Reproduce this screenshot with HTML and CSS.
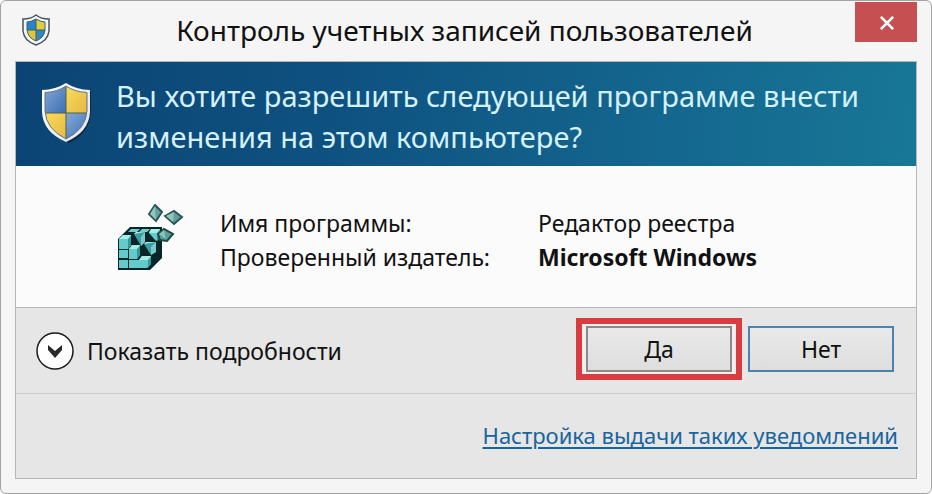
FILE: index.html
```html
<!DOCTYPE html>
<html lang="ru">
<head>
<meta charset="utf-8">
<title>Контроль учетных записей пользователей</title>
<link rel="stylesheet" href="styles.css">
</head>
<body>
<svg class="defs" aria-hidden="true">
  <defs>
    <linearGradient id="blue" x1="0" y1="0" x2="1" y2="1"><stop offset="0" stop-color="#86a9d6"/><stop offset="1" stop-color="#3c6fb2"/></linearGradient>
    <linearGradient id="gold" x1="0" y1="0" x2="1" y2="1"><stop offset="0" stop-color="#fbdc58"/><stop offset="1" stop-color="#e3b845"/></linearGradient>
    <linearGradient id="rim" x1="0" y1="0" x2="1" y2="1"><stop offset="0" stop-color="#ffffff"/><stop offset="1" stop-color="#dde5ec"/></linearGradient>
    <clipPath id="inner"><path d="M24 4Q33 10 45 10.500V29Q44 47 24 57Q4 47 3 29V10.500Q15 10 24 4Z"/></clipPath>
    <symbol id="shield" viewBox="0 0 50 62">
      <path d="M26 3Q35 9 49 9V30Q48 51 27 61Q6 51 3 31V10Q17 9 26 3Z" fill="#101c2c" opacity=".75"/>
      <path d="M24 1Q34 7.500 48 8V30Q47 50 24 60Q1 50 0 30V8Q14 7.500 24 1Z" fill="url(#rim)"/>
      <g clip-path="url(#inner)">
        <path d="M2 3H24V31H2Z" fill="url(#blue)"/>
        <path d="M24 3H46V31H24Z" fill="url(#gold)"/>
        <path d="M2 31H24V58H2Z" fill="url(#gold)"/>
        <path d="M24 31H46V58H24Z" fill="url(#blue)"/>
        <path d="M24 4V58M3 31H45" stroke="#4c6254" stroke-width="1" fill="none"/>
      </g>
      <path d="M24 4Q33 10 45 10.500V29Q44 47 24 57Q4 47 3 29V10.500Q15 10 24 4Z" fill="none" stroke="#60748a" stroke-width="1"/>
    </symbol>
    <symbol id="shield-small" viewBox="0 0 28 32">
      <path d="M14 1Q19 5 27 5V17Q26 27 14 31Q2 27 1 17V5Q9 5 14 1Z" fill="#f4f7f8" stroke="#48535c" stroke-width="1.500"/>
      <path d="M14 5Q9 8 5 8V16H14Z" fill="#2684c8"/>
      <path d="M14 5Q19 8 23 8V16H14Z" fill="#e5cc3c"/>
      <path d="M5 16H14V27Q6 24 5 16Z" fill="#e0c438"/>
      <path d="M23 16H14V27Q22 24 23 16Z" fill="#3585c0"/>
      <path d="M14 5Q9 8 5 8V16Q6 24 14 27Q22 24 23 16V8Q19 8 14 5ZM14 5V27M5 16H23" fill="none" stroke="#35606c" stroke-width="1"/>
    </symbol>
  </defs>
</svg>
<main class="window">
  <header class="titlebar">
    <svg class="title-icon" aria-hidden="true"><use href="#shield-small"/></svg>
    <h1 class="title">Контроль учетных записей пользователей</h1>
    <button class="close" type="button" aria-label="Закрыть">
      <svg class="close-icon" viewBox="0 0 18 16" aria-hidden="true"><path d="M2 1L16 15M16 1L2 15" stroke="#fff" stroke-width="3"/></svg>
    </button>
  </header>
  <div class="content">
    <section class="banner">
      <svg class="banner-icon" aria-hidden="true"><use href="#shield"/></svg>
      <h2 class="question">Вы хотите разрешить следующей программе внести изменения на этом компьютере?</h2>
    </section>
    <section class="details">
      <svg class="app-icon" viewBox="0 0 66 68" aria-hidden="true">
        <path d="M0 35L12 23H44V54L32 66H0Z" fill="#06262a"/>
        <path d="M13 25H22L19 28H10ZM24 25H32L29 28H21ZM34 25H42L39 28H31Z" fill="#6fcfcb"/>
        <path d="M1 35L5 31H13V41L10 45H1ZM1 46H10V54H1ZM1 56H10V64H1ZM11 56H21V64H11Z" fill="#62cccc"/>
        <path d="M11 45L14 41H22V51L19 55H11ZM21 56L24 52H33V60L29 64H21ZM31 29L33 25H42V34L38 37Z" fill="#62cccc"/>
        <path d="M16 30L18 28H27V38L23 42Z" fill="#3d9c9f"/>
        <path d="M16 30L18 28H27Z" fill="#a5ece8"/>
        <path d="M27 28V38L23 42V33Z" fill="#79c9c8"/>
        <path d="M26 40L28 38H38V48L33 51Z" fill="#3d9c9f"/>
        <path d="M26 40L28 38H38Z" fill="#a5ece8"/>
        <path d="M38 38V48L33 51V43Z" fill="#79c9c8"/>
        <path d="M1 35L5 31H13L10 35ZM11 45L14 41H22L19 45ZM21 56L24 52H33L30 56ZM31 29L33 25H42L39 29Z" fill="#a9ebe7"/>
        <path d="M13 32V41L10 45V35ZM22 42V51L19 55V45ZM33 53V60L30 64V56ZM42 26V34L39 37V29Z" fill="#35999b"/>
        <path d="M37 1L44 8L38 17L31 10Z" fill="#62a09b" stroke="#2b5554" stroke-width="2"/>
        <path d="M37 2L38 16L32 10Z" fill="#91c4bd"/>
        <path d="M47 12L56 7L64 13L56 20Z" fill="#62a09b" stroke="#2b5554" stroke-width="2"/>
        <path d="M48 12L56 8L55 18Z" fill="#91c4bd"/>
        <path d="M40 30L46 25L55 30L49 37L42 36Z" fill="#589f9c" stroke="#1f4747" stroke-width="2"/>
        <path d="M41 30L46 26L48 35Z" fill="#8ac4be"/>
      </svg>
      <dl class="facts">
        <dt>Имя программы:</dt><dd>Редактор реестра</dd>
        <dt>Проверенный издатель:</dt><dd class="publisher">Microsoft Windows</dd>
      </dl>
    </section>
    <section class="actions">
      <button class="expander" type="button">
        <svg class="chevron" viewBox="0 0 38 38" aria-hidden="true"><circle cx="19" cy="19" r="18" fill="#fff" stroke="#1b1b1b" stroke-width="1.500"/><path d="M12 13L19 19L26 13V18L19 26L12 18Z" fill="#292929"/></svg>
        <span>Показать подробности</span>
      </button>
      <div class="choices">
        <div class="highlight"><button class="choice" type="button">Да</button></div>
        <button class="choice choice-default" type="button">Нет</button>
      </div>
    </section>
    <footer class="footer"><a class="settings" href="#">Настройка выдачи таких уведомлений</a></footer>
  </div>
</main>
</body>
</html>
```
FILE: styles.css
```css
* { box-sizing: border-box; }

body {
  margin: 0;
  background: #fff;
  color: #111;
  font-family: "Noto Sans", "Open Sans", sans-serif;
  font-size: 23px;
  line-height: 34px;
}

button {
  padding: 0;
  border: 0;
  background: none;
  color: inherit;
  font: inherit;
}

.defs { position: absolute; width: 0; height: 0; }

.window {
  min-height: 100vh;
  padding: 0 14px 14px;
  border: 1px solid #a3a3a3;
  border-radius: 6px;
  background: #f6f5f6;
}

.titlebar {
  display: flex;
  align-items: flex-start;
  height: 60px;
}

.title-icon { flex: none; width: 28px; height: 32px; margin: 13px 0 0 7px; }

.title {
  flex: 1;
  margin: 11px 0 0;
  padding-left: 24px;
  text-align: center;
  font-size: 28px;
  font-weight: 400;
  line-height: 36px;
}

.close {
  display: flex;
  align-items: center;
  justify-content: center;
  width: 62px;
  height: 40px;
  margin-top: 1px;
  background: #c64f52;
}

.close-icon { width: 16px; height: 14px; margin: 2px 0 0 2px; }

.content { border: 1px solid #b4b6b7; background: #e6e6e6; }

.banner {
  display: flex;
  align-items: flex-start;
  gap: 24px;
  padding: 13px 40px 9px 26px;
  background: linear-gradient(100deg, #0b4474 0%, #0e5180 35%, #14678f 72%, #187796 100%);
}

.banner-icon { flex: none; width: 50px; height: 62px; margin-top: 7px; }

.question {
  margin: 0;
  color: #d4f1fc;
  font-size: 29px;
  font-weight: 400;
  line-height: 41px;
}

.details {
  display: flex;
  gap: 36px;
  padding: 38px 0 33px 102px;
  border-bottom: 1px solid #b4b6b7;
  background: #fbfbfb;
}

.app-icon { flex: none; width: 66px; height: 68px; }

.facts {
  display: grid;
  grid-template-columns: 282px auto;
  gap: 0 36px;
  align-content: start;
  margin: 2px 0 0;
}

.facts dd { margin: 0; }
.publisher { font-weight: 700; }

.actions {
  display: flex;
  align-items: flex-start;
  justify-content: space-between;
  height: 86px;
  padding: 10px 22px 0 20px;
  border-bottom: 1px solid #cecece;
}

.expander { display: flex; align-items: center; gap: 13px; margin-top: 14px; }
.chevron { width: 38px; height: 38px; }

.choices { display: flex; align-items: center; gap: 6px; }

.highlight {
  padding: 2px 4px;
  border: 6px solid #d83b40;
  background: #f3eded;
}

.choice {
  display: block;
  width: 146px;
  height: 46px;
  border: 2px solid #8c8989;
  background: linear-gradient(#e9e9e9, #dedede);
}

.choice-default { border-color: #4a83ab; }

.footer {
  display: flex;
  justify-content: flex-end;
  height: 84px;
  padding: 24px 18px 0 0;
}

.settings { color: #17659f; font-size: 22px; text-decoration-thickness: 2px; text-underline-offset: 3px; }
```
